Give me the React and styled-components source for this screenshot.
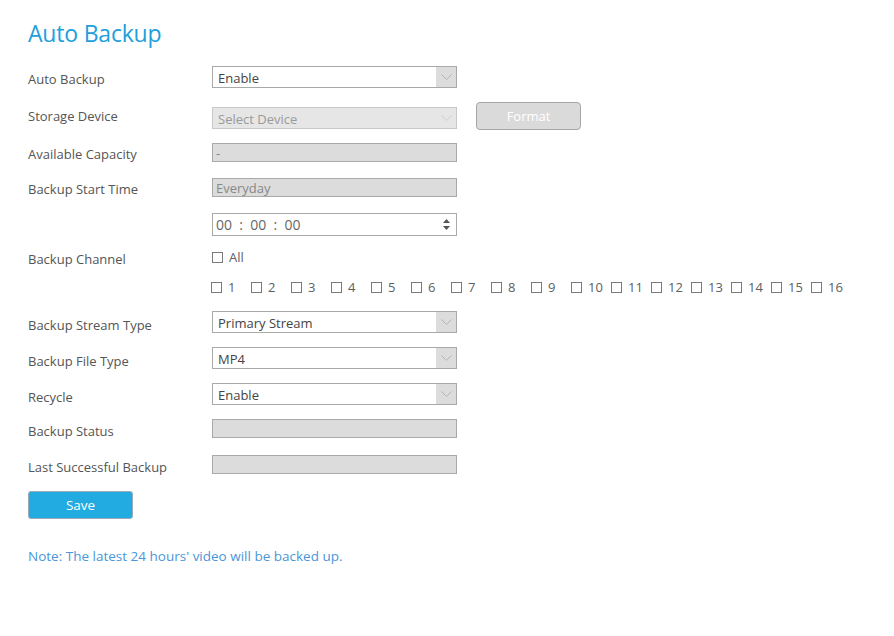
import React from "react";
import styled, { createGlobalStyle } from "styled-components";

const Global = createGlobalStyle`
  html, body { margin: 0; padding: 0; background: #fff; }
  body { font-family: "Open Sans", "Noto Sans", Arial, sans-serif; }
`;

const Page = styled.div`
  width: 894px;
  height: 636px;
  box-sizing: border-box;
  padding: 17px 0 0 28px;
  display: flex;
  flex-direction: column;
`;

const Title = styled.h1`
  margin: 0;
  font-weight: 400;
  font-size: 23px;
  line-height: 32px;
  color: #229fdb;
  letter-spacing: -0.2px;
`;

const Form = styled.div`
  display: flex;
  flex-direction: column;
`;

const Row = styled.div`
  display: flex;
  align-items: ${(p) => p.$align || "center"};
  height: ${(p) => p.$h || 22}px;
  margin-top: ${(p) => p.$mt || 0}px;
`;

const Label = styled.div`
  width: 184px;
  flex: none;
  align-self: center;
  font-size: 13px;
  color: #555;
  position: relative;
  top: ${(p) => p.$dy ?? 1}px;
  white-space: nowrap;
`;

const SelectBox = styled.div`
  width: 245px;
  height: 22px;
  box-sizing: border-box;
  border: 1px solid ${(p) => (p.$disabled ? "#c8c8c8" : "#a9a9a9")};
  background: ${(p) => (p.$disabled ? "#e6e6e6" : "#fff")};
  display: flex;
  align-items: stretch;
  font-size: 13px;
  color: ${(p) => (p.$disabled ? "#9a9a9a" : "#444")};
  margin-bottom: ${(p) => (p.$disabled ? 1 : 0)}px;
`;

const SelectText = styled.div`
  flex: 1;
  padding-left: 5px;
  display: flex;
  align-items: center;
  padding-top: 1px;
`;

const Arrow = styled.div`
  width: 20px;
  background: ${(p) => (p.$disabled ? "transparent" : "#dcdcdc")};
  display: flex;
  align-items: center;
  justify-content: center;
`;

const TextBox = styled.div`
  width: 245px;
  height: 19px;
  box-sizing: border-box;
  border: 1px solid #a9a9a9;
  background: #dcdcdc;
  font-size: 13px;
  color: #888;
  padding-left: 3px;
  display: flex;
  align-items: center;
`;

const TimeBox = styled.div`
  width: 245px;
  height: 23px;
  box-sizing: border-box;
  border: 1px solid #a9a9a9;
  background: #fff;
  display: flex;
  align-items: center;
  font-size: 14px;
  color: #666;
  padding-left: 3px;
  padding-right: 6px;
`;

const TimeText = styled.div`
  flex: 1;
  white-space: pre;
`;

const Spinner = styled.div`
  display: flex;
  flex-direction: column;
  gap: 3px;
`;

const FormatButton = styled.button`
  margin-left: 19px;
  width: 105px;
  height: 28px;
  border: 1px solid #a6a6a6;
  border-radius: 4px;
  background: #dadada;
  color: #fff;
  font-family: inherit;
  font-size: 13px;
  padding: 0;
`;

const CheckGroup = styled.div`
  display: flex;
  margin-left: -1px;
`;

const CheckItem = styled.label`
  width: ${(p) => p.$w || 40}px;
  display: flex;
  align-items: center;
  gap: 6px;
  font-size: 13px;
  color: #5a5f66;
  flex: none;
`;

const Box = styled.span`
  width: 11px;
  height: 11px;
  box-sizing: border-box;
  border: 1px solid #7a7a7a;
  background: #fff;
  flex: none;
`;

const SaveButton = styled.button`
  margin-top: 17px;
  width: 105px;
  height: 28px;
  border: 1px solid #9ab;
  border-radius: 3px;
  background: #21abe0;
  color: #fff;
  font-family: inherit;
  font-size: 13.5px;
  padding: 0;
`;

const Note = styled.div`
  margin-top: 28px;
  font-size: 13.5px;
  color: #4a96d8;
`;

const Chevron = ({ color = "#b4b4b4" }) => (
  <svg width="11" height="6" viewBox="0 0 11 6">
    <path d="M0.5 0.5 L5.5 5.5 L10.5 0.5" fill="none" stroke={color} strokeWidth="1" />
  </svg>
);

const Select = ({ value, disabled }) => (
  <SelectBox $disabled={disabled}>
    <SelectText>{value}</SelectText>
    <Arrow $disabled={disabled}>
      <Chevron color={disabled ? "#cfcfcf" : "#b4b4b4"} />
    </Arrow>
  </SelectBox>
);

const Check = ({ label, w }) => (
  <CheckItem $w={w}>
    <Box />
    {label}
  </CheckItem>
);

export default function App() {
  const channels = Array.from({ length: 16 }, (_, i) => i + 1);
  return (
    <>
      <Global />
      <Page>
        <Title>Auto Backup</Title>
        <Form>
          <Row $mt={17}>
            <Label $dy={2}>Auto Backup</Label>
            <Select value="Enable" />
          </Row>
          <Row $h={28} $mt={14} $align="flex-end">
            <Label $dy={0}>Storage Device</Label>
            <Select value="Select Device" disabled />
            <FormatButton>Format</FormatButton>
          </Row>
          <Row $h={19} $mt={13}>
            <Label>Available Capacity</Label>
            <TextBox>-</TextBox>
          </Row>
          <Row $h={19} $mt={16}>
            <Label>Backup Start Time</Label>
            <TextBox>Everyday</TextBox>
          </Row>
          <Row $h={23} $mt={16}>
            <Label />
            <TimeBox>
              <TimeText>00  :  00  :  00</TimeText>
              <Spinner>
                <svg width="7" height="4" viewBox="0 0 7 4"><path d="M3.5 0 L7 4 L0 4 Z" fill="#555" /></svg>
                <svg width="7" height="4" viewBox="0 0 7 4"><path d="M0 0 L7 0 L3.5 4 Z" fill="#555" /></svg>
              </Spinner>
            </TimeBox>
          </Row>
          <Row $h={20} $mt={11}>
            <Label $dy={2}>Backup Channel</Label>
            <Check label="All" w={60} />
          </Row>
          <Row $h={20} $mt={10}>
            <Label />
            <CheckGroup>
              {channels.map((n) => (
                <Check key={n} label={n} />
              ))}
            </CheckGroup>
          </Row>
          <Row $mt={14}>
            <Label $dy={3}>Backup Stream Type</Label>
            <Select value="Primary Stream" />
          </Row>
          <Row $mt={14}>
            <Label $dy={3}>Backup File Type</Label>
            <Select value="MP4" />
          </Row>
          <Row $mt={14}>
            <Label $dy={3}>Recycle</Label>
            <Select value="Enable" />
          </Row>
          <Row $h={19} $mt={14}>
            <Label $dy={2}>Backup Status</Label>
            <TextBox />
          </Row>
          <Row $h={19} $mt={17}>
            <Label $dy={2}>Last Successful Backup</Label>
            <TextBox />
          </Row>
        </Form>
        <SaveButton>Save</SaveButton>
        <Note>Note: The latest 24 hours' video will be backed up.</Note>
      </Page>
    </>
  );
}
